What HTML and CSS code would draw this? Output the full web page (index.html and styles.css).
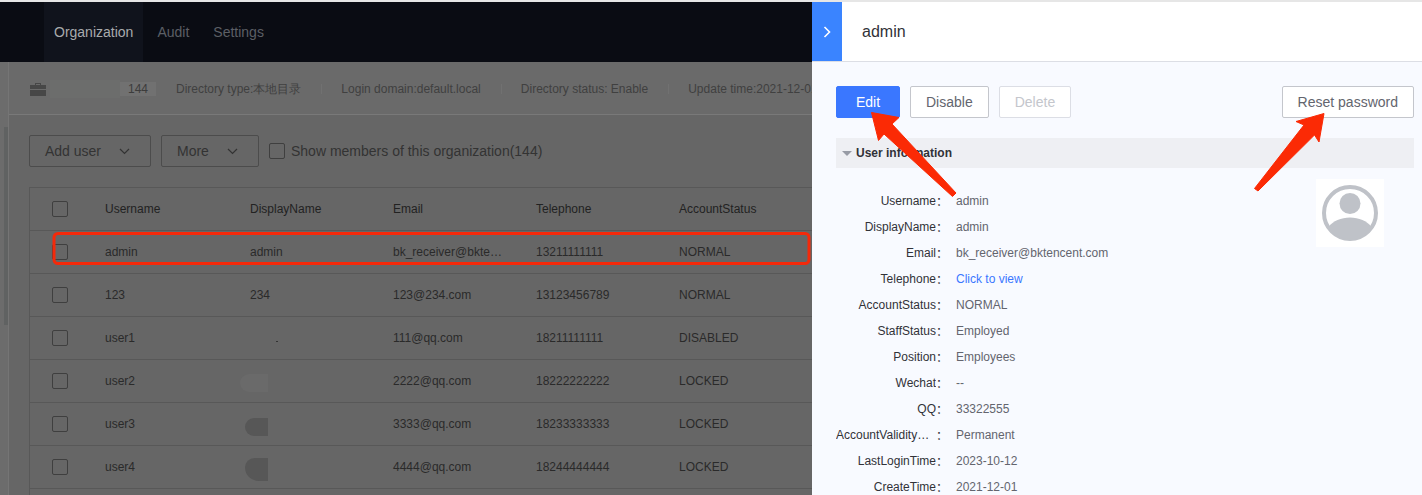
FILE: index.html
```html
<!DOCTYPE html>
<html>
<head>
    <meta charset="UTF-8">
    <title>User management</title>
    <link rel="stylesheet" href="styles.css">
</head>
<body>
    <div class="app">
        <!-- dimmed page behind the side panel -->
        <div class="main">
            <div class="topnav">
                <a class="active" href="#org">Organization</a>
                <a href="#audit">Audit</a>
                <a href="#settings">Settings</a>
            </div>
            <div class="content">
                <div class="sidebar"><div class="thumb"></div></div>
                <div class="page">
                    <div class="infobar">
                        <svg class="case" width="16" height="14" viewBox="0 0 16 14"><path d="M5 3V1h6v2h5v4H0V3zM6 2v1h4V2zM0 8h16v6H0z" fill="#474747"/></svg>
                        <span class="smudge"></span>
                        <span class="count">144</span>
                        <span class="info">Directory type:本地目录</span>
                        <span class="info sep">Login domain:default.local</span>
                        <span class="info sep">Directory status: Enable</span>
                        <span class="info sep">Update time:2021-12-01</span>
                    </div>
                    <div class="toolbar">
                        <button class="drop add" type="button">Add user
                            <svg width="11" height="7" viewBox="0 0 11 7"><path d="M1 1l4.500 4.500L10 1" fill="none" stroke="#333" stroke-width="1.200"/></svg>
                        </button>
                        <button class="drop more" type="button">More
                            <svg width="11" height="7" viewBox="0 0 11 7"><path d="M1 1l4.500 4.500L10 1" fill="none" stroke="#333" stroke-width="1.200"/></svg>
                        </button>
                        <span class="box"></span>
                        <span class="show">Show members of this organization(144)</span>
                    </div>
                    <table class="users">
                        <colgroup>
                            <col class="c-check"><col class="c-name"><col class="c-wide"><col class="c-wide"><col class="c-wide"><col class="c-last">
                        </colgroup>
                        <thead>
                            <tr><th><span class="box"></span></th><th>Username</th><th>DisplayName</th><th>Email</th><th>Telephone</th><th>AccountStatus</th></tr>
                        </thead>
                        <tbody>
                            <tr><td><span class="box"></span></td><td>admin</td><td>admin</td><td class="cut">bk_receiver@bktencent.com</td><td>13211111111</td><td>NORMAL</td></tr>
                            <tr><td><span class="box"></span></td><td>123</td><td>234</td><td>123@234.com</td><td>13123456789</td><td>NORMAL</td></tr>
                            <tr><td><span class="box"></span></td><td>user1</td><td><span class="blot dot"></span></td><td>111@qq.com</td><td>18211111111</td><td>DISABLED</td></tr>
                            <tr><td><span class="box"></span></td><td>user2</td><td><span class="blot pale"></span></td><td>2222@qq.com</td><td>18222222222</td><td>LOCKED</td></tr>
                            <tr><td><span class="box"></span></td><td>user3</td><td><span class="blot dark"></span></td><td>3333@qq.com</td><td>18233333333</td><td>LOCKED</td></tr>
                            <tr><td><span class="box"></span></td><td>user4</td><td><span class="blot dark tall"></span></td><td>4444@qq.com</td><td>18244444444</td><td>LOCKED</td></tr>
                            <tr><td></td><td></td><td></td><td></td><td></td><td></td></tr>
                        </tbody>
                    </table>
                </div>
            </div>
        </div>

        <!-- side panel -->
        <div class="panel">
            <div class="panel-head">
                <div class="toggle">
                    <svg width="8" height="12" viewBox="0 0 8 12"><path d="M1.500 1l5 5-5 5" fill="none" stroke="#fff" stroke-width="1.600"/></svg>
                </div>
                <div class="panel-title">admin</div>
            </div>
            <div class="panel-body">
                <div class="actions">
                    <button class="btn primary" type="button">Edit</button>
                    <button class="btn" type="button">Disable</button>
                    <button class="btn disabled" type="button">Delete</button>
                    <button class="btn reset" type="button">Reset password</button>
                </div>
                <div class="section"><span class="caret"></span>User information</div>
                <div class="details">
                    <div class="rows">
                        <div class="row"><span class="key">Username</span><span class="colon">：</span><span class="val">admin</span></div>
                        <div class="row"><span class="key">DisplayName</span><span class="colon">：</span><span class="val">admin</span></div>
                        <div class="row"><span class="key">Email</span><span class="colon">：</span><span class="val">bk_receiver@bktencent.com</span></div>
                        <div class="row"><span class="key">Telephone</span><span class="colon">：</span><a class="val link" href="#tel">Click to view</a></div>
                        <div class="row"><span class="key">AccountStatus</span><span class="colon">：</span><span class="val">NORMAL</span></div>
                        <div class="row"><span class="key">StaffStatus</span><span class="colon">：</span><span class="val">Employed</span></div>
                        <div class="row"><span class="key">Position</span><span class="colon">：</span><span class="val">Employees</span></div>
                        <div class="row"><span class="key">Wechat</span><span class="colon">：</span><span class="val">--</span></div>
                        <div class="row"><span class="key">QQ</span><span class="colon">：</span><span class="val">33322555</span></div>
                        <div class="row"><span class="key">AccountValidityPeriod</span><span class="colon">：</span><span class="val">Permanent</span></div>
                        <div class="row"><span class="key">LastLoginTime</span><span class="colon">：</span><span class="val">2023-10-12</span></div>
                        <div class="row"><span class="key">CreateTime</span><span class="colon">：</span><span class="val">2021-12-01</span></div>
                    </div>
                    <div class="avatar">
                        <svg width="56" height="56" viewBox="0 0 56 56">
                            <circle cx="28" cy="28" r="26" fill="#fff" stroke="#bfc2c8" stroke-width="4"/>
                            <circle cx="28" cy="18.500" r="10.500" fill="#bfc2c8"/>
                            <path d="M6.500 42C11 36 19 32.500 28 32.500S45 36 49.500 42A26 26 0 0 1 28 54 26 26 0 0 1 6.500 42z" fill="#bfc2c8"/>
                        </svg>
                    </div>
                </div>
            </div>
        </div>

        <!-- red markup drawn over the screenshot -->
        <svg class="markup" width="1422" height="495" viewBox="0 0 1422 495">
            <rect x="54" y="233.500" width="755" height="30" rx="4" fill="none" stroke="#f4290a" stroke-width="3"/>
            <path d="M871.500 112.500L899 117.500 892 124 956 193 952.500 196.500 884 134 878.500 140.500z" fill="#fb2a05" stroke="#fb2a05" stroke-linejoin="round"/>
            <path d="M1324 113.500L1296 121.500 1304 125 1254.500 188.500 1258 191 1314.500 135 1319 142z" fill="#fb2a05" stroke="#fb2a05" stroke-linejoin="round"/>
        </svg>
    </div>
</body>
</html>
```

FILE: styles.css
```css
* {
    box-sizing: border-box;
}
html, body {
    margin: 0;
    height: 100%;
    overflow: hidden;
}
body {
    font-family: "Liberation Sans", Arial, sans-serif;
    font-size: 12px;
    background-color: #e6e6e6;
}
button {
    font-family: inherit;
}

.app {
    position: relative;
    display: flex;
    height: 495px;
    padding-top: 2px;
}

/* Dimmed page */
.main {
    width: 812px;
    flex: none;
    display: flex;
    flex-direction: column;
    overflow: hidden;
    background-color: #666;
}
.topnav {
    display: flex;
    flex: none;
    height: 60px;
    padding-left: 44px;
    background-color: #0a0c13;
}
.topnav a {
    padding: 0 10px;
    line-height: 60px;
    font-size: 14px;
    color: #5c5f65;
    text-decoration: none;
    margin-right: 4px;
}
.topnav a.active {
    background-color: #10131c;
    color: #a9abad;
}
.content {
    display: flex;
    flex: 1;
    min-height: 0;
}
.sidebar {
    width: 9px;
    flex: none;
    padding: 65px 0 0 4px;
    border-right: 1px solid #757575;
    background-color: #6c6c6c;
}
.thumb {
    width: 4px;
    height: 198px;
    background-color: #606262;
}
.page {
    flex: none;
    width: 830px;
}

.infobar {
    display: flex;
    align-items: center;
    height: 53px;
    padding: 2px 0 0 21px;
    border-bottom: 1px solid #797979;
    background-color: #6a6a6a;
    color: #404040;
}
.case {
    flex: none;
    margin: -1px 4px 0 0;
}
.smudge {
    width: 70px;
    height: 18px;
    background-color: #6c6d6c;
}
.count {
    width: 36px;
    height: 14px;
    line-height: 15px;
    text-align: center;
    background-color: #717171;
    color: #3c3c3c;
    margin-right: 20px;
}
.info {
    white-space: nowrap;
}
.info.sep {
    margin-left: 20px;
    padding-left: 20px;
    background: linear-gradient(#717171, #717171) left center / 1px 10px no-repeat;
}

.toolbar {
    display: flex;
    align-items: center;
    height: 72px;
    padding: 0 0 0 20px;
    font-size: 14px;
    color: #333;
}
.drop {
    display: flex;
    align-items: center;
    height: 32px;
    border: 1px solid #4c4c4c;
    border-radius: 2px;
    background: transparent;
    font-size: 14px;
    color: #333;
}
.drop.add {
    width: 122px;
    padding-left: 15px;
    gap: 18px;
    margin-right: 10px;
}
.drop.more {
    width: 98px;
    padding-left: 15px;
    gap: 18px;
    margin-right: 10px;
}
.box {
    display: block;
    width: 16px;
    height: 16px;
    border: 1px solid #3f3f3f;
    border-radius: 2px;
}
.show {
    margin-left: 6px;
    white-space: nowrap;
}

.users {
    margin-left: 20px;
    width: 810px;
    table-layout: fixed;
    border-collapse: collapse;
    border: 1px solid #585858;
    color: #2a2a2a;
}
.users col.c-check { width: 75px; }
.users col.c-name { width: 145px; }
.users col.c-wide { width: 143px; }
.users th, .users td {
    height: 43px;
    padding: 0 0 0 0.5px;
    border-bottom: 1px solid #585858;
    text-align: left;
    font-weight: normal;
    white-space: nowrap;
}
.users th {
    color: #222;
}
.users th:first-child, .users td:first-child {
    padding-left: 22px;
}
.users .cut {
    padding-right: 33px;
    overflow: hidden;
    text-overflow: ellipsis;
}
.blot {
    display: block;
}
.blot.dot {
    width: 2px;
    height: 1px;
    margin: 6px 0 0 26px;
    background-color: #333;
}
.blot.pale {
    width: 28px;
    height: 18px;
    margin: 4px 0 0 -10px;
    border-radius: 9px 0 0 9px;
    background-color: #6a6a6a;
}
.blot.dark {
    width: 23px;
    height: 18px;
    margin: 6px 0 0 -5px;
    border-radius: 9px 0 0 9px;
    background-color: #575757;
}
.blot.dark.tall {
    height: 23px;
    margin-top: 4px;
    border-radius: 10px 0 0 14px;
}

/* Side panel */
.panel {
    flex: 1;
    min-width: 0;
    overflow: hidden;
    background-color: #f8faff;
    color: #63656e;
}
.panel-head {
    display: flex;
    height: 60px;
    border-bottom: 1px solid #dcdee5;
    background-color: #fff;
}
.toggle {
    display: flex;
    align-items: center;
    justify-content: center;
    width: 30px;
    background-color: #3a84ff;
}
.panel-title {
    padding-left: 20px;
    line-height: 60px;
    font-size: 16px;
    color: #313238;
}
.panel-body {
    padding: 24px 8px 0 24px;
}
.actions {
    display: flex;
    gap: 10px;
}
.btn {
    height: 32px;
    padding: 0 15px;
    border: 1px solid #c4c6cc;
    border-radius: 2px;
    background-color: #fff;
    font-size: 14px;
    color: #63656e;
}
.btn.primary {
    width: 64px;
    border-color: #3a77ff;
    background-color: #3a77ff;
    color: #fff;
}
.btn.disabled {
    border-color: #dcdee5;
    color: #c4c6cc;
}
.btn.reset {
    margin-left: auto;
}
.section {
    display: flex;
    align-items: center;
    height: 30px;
    margin-top: 20px;
    padding-left: 6px;
    background-color: #eeeff3;
    font-weight: bold;
    color: #313238;
}
.caret {
    width: 0;
    height: 0;
    margin-right: 4px;
    border: 5px solid transparent;
    border-top: 5px solid #979ba5;
    border-bottom: 0;
}
.details {
    display: flex;
    justify-content: space-between;
    margin-top: 20px;
}
.row {
    display: flex;
    height: 26px;
    line-height: 26px;
    white-space: nowrap;
}
.key {
    width: 100px;
    overflow: hidden;
    text-overflow: ellipsis;
    text-align: right;
    color: #313238;
}
.colon {
    width: 12px;
    margin-right: 8px;
    font-family: "Noto Sans CJK SC", sans-serif;
    color: #313238;
}
.link {
    color: #3a77ff;
    text-decoration: none;
}
.avatar {
    display: flex;
    align-items: center;
    justify-content: center;
    width: 68px;
    height: 68px;
    margin: -9px 30px 0 0;
    background-color: #fff;
}

.markup {
    position: absolute;
    left: 0;
    top: 0;
    pointer-events: none;
}
```
